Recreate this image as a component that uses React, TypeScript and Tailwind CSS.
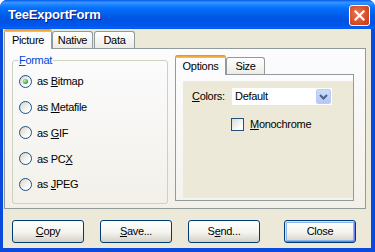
import type { ReactNode } from "react";

function Radio({ checked }: { checked?: boolean }) {
  return (
    <span className="w-[13px] h-[13px] shrink-0 rounded-full border border-[#1C5180] bg-[linear-gradient(135deg,#D6D3C8,#FFFFFF_75%)] flex items-center justify-center">
      {checked && (
        <span className="w-[5px] h-[5px] rounded-full bg-[radial-gradient(circle_at_35%_35%,#B8F5B8,#21A121_75%)]" />
      )}
    </span>
  );
}

function RadioRow({ checked, children }: { checked?: boolean; children: ReactNode }) {
  return (
    <div className="h-[25.8px] flex items-center gap-[5px] pl-[1px]">
      <Radio checked={checked} />
      <span>{children}</span>
    </div>
  );
}

function Btn({ children, isDefault }: { children: ReactNode; isDefault?: boolean }) {
  return (
    <button
      className={
        isDefault
          ? "h-[23px] w-[72px] rounded-[3px] border border-[#003C74] bg-[linear-gradient(to_bottom,#FFFFFF,#F3F3EF_55%,#D6D0C5)] shadow-[inset_1px_1px_0_#CEE7FF,inset_-1px_-1px_0_#6982EE,inset_0_0_0_2px_#8DB2F0] text-black"
          : "h-[23px] w-[72px] rounded-[3px] border border-[#003C74] bg-[linear-gradient(to_bottom,#FFFFFF,#F3F3EF_55%,#D6D0C5)] text-black"
      }
    >
      {children}
    </button>
  );
}

export default function App() {
  return (
    <div className="w-[375px] h-[252px] flex flex-col bg-[#0A4BDD] rounded-t-[7px] overflow-hidden font-['Liberation_Sans',Arial,sans-serif] text-[11px] tracking-[-0.3px] text-black select-none">

      {/* title bar */}
      <div className="h-[29px] shrink-0 flex items-center justify-between pl-[8px] pr-[5px] bg-[linear-gradient(to_bottom,#0058EE_0%,#3A93FF_8%,#288EFF_13%,#127DFF_20%,#036FFC_30%,#0262EE_45%,#0057E5_60%,#0054E3_75%,#0055EB_86%,#005BF5_93%,#026AFE_97%,#0047D8_100%)]">
        <span className="text-white font-bold text-[13px] tracking-[-0.2px] [text-shadow:1px_1px_0_#0A1883]">
          TeeExportForm
        </span>
        <button className="w-[21px] h-[21px] mt-[2px] rounded-[3px] border border-white bg-[radial-gradient(circle_at_40%_40%,#E8785A,#D2471F_70%,#C23A14)] flex items-center justify-center">
          <svg width="11" height="11" viewBox="0 0 11 11">
            <path d="M1.5 1.5 L9.5 9.5 M9.5 1.5 L1.5 9.5" stroke="white" strokeWidth="2.2" strokeLinecap="square" />
          </svg>
        </button>
      </div>

      {/* body */}
      <div className="flex-1 ml-[3px] mr-[4px] mb-[4px] bg-[#ECE9D8] flex flex-col">

        {/* page tabs */}
        <div className="h-[19px] flex items-end pl-[1px] relative z-10">
          <div className="h-[20px] w-[48px] -mb-[1px] flex flex-col bg-[#FCFCFE] border-x border-[#919B9C] rounded-t-[3px]">
            <div className="h-[3px] rounded-t-[3px] bg-[linear-gradient(to_bottom,#E68B2C,#FFC73C)] -mx-[1px]" />
            <div className="flex-1 flex items-center justify-center">Picture</div>
          </div>
          <div className="h-[17px] w-[41px] flex items-center justify-center border border-b-0 border-[#919B9C] rounded-t-[3px] bg-[linear-gradient(to_bottom,#FFFFFF,#ECEBE6)]">
            Native
          </div>
          <div className="h-[17px] w-[41px] ml-[1px] flex items-center justify-center border border-b-0 border-[#919B9C] rounded-t-[3px] bg-[linear-gradient(to_bottom,#FFFFFF,#ECEBE6)]">
            Data
          </div>
        </div>

        {/* picture page */}
        <div className="ml-[1px] w-[362px] h-[161px] border border-[#919B9C] bg-[linear-gradient(to_bottom,#FCFCFE,#F2F0E8)] flex items-start">

          <fieldset className="ml-[7px] mt-[3px] w-[156px] h-[152px] border border-[#D0D0BF] rounded-[3px] px-[5px]">
            <legend className="px-[1px] text-[#0046D5]">
              <u>F</u>ormat
            </legend>
            <div className="flex flex-col">
              <RadioRow checked>
                as <u>B</u>itmap
              </RadioRow>
              <RadioRow>
                as <u>M</u>etafile
              </RadioRow>
              <RadioRow>
                as <u>G</u>IF
              </RadioRow>
              <RadioRow>
                as PC<u>X</u>
              </RadioRow>
              <RadioRow>
                as <u>J</u>PEG
              </RadioRow>
            </div>
          </fieldset>

          {/* options page control */}
          <div className="ml-[7px] mt-[6px] flex flex-col">
            <div className="h-[19px] flex items-end relative z-10">
              <div className="h-[20px] w-[51px] -mb-[1px] flex flex-col bg-[#FCFCFE] border-x border-[#919B9C] rounded-t-[3px]">
                <div className="h-[3px] rounded-t-[3px] bg-[linear-gradient(to_bottom,#E68B2C,#FFC73C)] -mx-[1px]" />
                <div className="flex-1 flex items-center justify-center">Options</div>
              </div>
              <div className="h-[17px] w-[39px] flex items-center justify-center border border-b-0 border-[#919B9C] rounded-t-[3px] bg-[linear-gradient(to_bottom,#FFFFFF,#ECEBE6)]">
                Size
              </div>
            </div>
            <div className="w-[179px] h-[127px] border border-[#919B9C] bg-[linear-gradient(to_bottom,#FCFCFE,#F4F3EE)] pl-[7px] pt-[6px] pb-[2px]">
              <div className="h-full bg-[#ECE9D8] pl-[9px] pt-[7px]">
                <div className="flex items-center h-[17px]">
                  <span className="w-[40px]">
                    <u>C</u>olors:
                  </span>
                  <div className="w-[100px] h-[17px] bg-white flex items-center justify-between pl-[3px] pr-[1px]">
                    <span>Default</span>
                    <span className="w-[15px] h-[15px] rounded-[2px] bg-[linear-gradient(to_bottom,#CCDBFC,#B4C8F6)] border border-[#B9CCF5] flex items-center justify-center">
                      <svg width="9" height="6" viewBox="0 0 9 6">
                        <path d="M1 1 L4.5 4.5 L8 1" fill="none" stroke="#4D6185" strokeWidth="2" />
                      </svg>
                    </span>
                  </div>
                </div>
                <div className="mt-[11px] ml-[39px] flex items-center gap-[6px]">
                  <span className="w-[13px] h-[13px] border border-[#1C5180] bg-[linear-gradient(135deg,#DCDBD5,#FFFFFF_80%)]" />
                  <span>
                    <u>M</u>onochrome
                  </span>
                </div>
              </div>
            </div>
          </div>
        </div>

        {/* buttons */}
        <div className="mt-[11px] pl-[9px] flex">
          <Btn>
            <u>C</u>opy
          </Btn>
          <div className="ml-[16px]">
            <Btn>
              <u>S</u>ave...
            </Btn>
          </div>
          <div className="ml-[16px]">
            <Btn>
              S<u>e</u>nd...
            </Btn>
          </div>
          <div className="ml-[24px]">
            <Btn isDefault>Close</Btn>
          </div>
        </div>
      </div>
    </div>
  );
}
